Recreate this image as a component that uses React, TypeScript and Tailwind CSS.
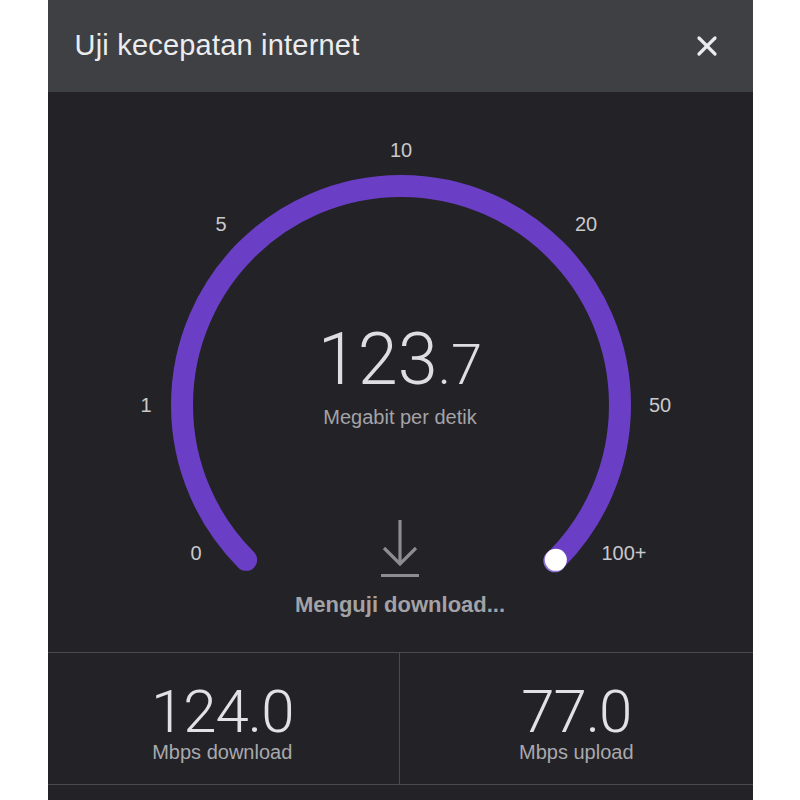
import { X } from 'lucide-react'

const CX = 353
const CY = 313
const R = 219
const D = R * Math.SQRT1_2

const LABELS = [
  { t: '10', x: 353, y: 58 },
  { t: '5', x: 173, y: 132 },
  { t: '20', x: 538, y: 132 },
  { t: '1', x: 98, y: 313 },
  { t: '50', x: 612, y: 313 },
  { t: '0', x: 148, y: 461 },
  { t: '100+', x: 576, y: 461 },
]

function Gauge() {
  const sx = CX - D
  const ex = CX + D
  const y = CY + D
  return (
    <svg className="absolute inset-0" width="705" height="560" viewBox="0 0 705 560">
      <path
        d={`M ${sx} ${y} A ${R} ${R} 0 1 1 ${ex} ${y}`}
        fill="none"
        stroke="#6a3fc5"
        strokeWidth="22"
        strokeLinecap="round"
      />
      <circle cx={ex - 1} cy={y + 1} r="11.5" fill="#8f73d8" />
      <circle cx={ex} cy={y} r="11" fill="#ffffff" />
      {LABELS.map((l) => (
        <text
          key={l.t}
          x={l.x}
          y={l.y}
          textAnchor="middle"
          dominantBaseline="central"
          fill="#c9c9cd"
          fontSize="20"
          fontFamily="'Liberation Sans', Arial, sans-serif"
        >
          {l.t}
        </text>
      ))}
    </svg>
  )
}

function Stat({ value, label }: { value: string; label: string }) {
  return (
    <div className="flex flex-col items-center justify-center pt-[5px]">
      <div className="text-[60px] leading-[62px] font-light text-[#e2e2e6] font-['Roboto',sans-serif] tracking-[-1px]">
        {value}
      </div>
      <div className="text-[20px] leading-[18px] text-[#a9a9ae] font-['Liberation_Sans',Arial,sans-serif]">
        {label}
      </div>
    </div>
  )
}

export default function App() {
  return (
    <div className="w-[800px] h-[800px] bg-white flex justify-center overflow-hidden">
      <div className="w-[705px] flex flex-col bg-[#232226] font-['Liberation_Sans',Arial,sans-serif]">
        <div className="h-[92px] shrink-0 bg-[#3e4044] flex items-center justify-between pl-[27px] pr-[30px]">
          <span className="text-[29px] text-[#ececee] tracking-[0.2px]">Uji kecepatan internet</span>
          <X className="w-[32px] h-[32px] text-[#ececee]" strokeWidth={2.4} />
        </div>

        <div className="relative h-[560px] shrink-0">
          <Gauge />
          <div className="absolute left-0 right-0 top-[232px] flex flex-col items-center">
            <div className="flex items-baseline text-[#dedee2] font-['Roboto',sans-serif] font-light leading-none">
              <span className="text-[72px]">123</span>
              <span className="text-[56px]">.7</span>
            </div>
            <div className="mt-[6px] text-[20px] text-[#a3a3a8]">Megabit per detik</div>
          </div>
          <div className="absolute left-0 right-0 top-[426px] flex flex-col items-center">
            <svg width="40" height="60" viewBox="0 0 40 60" fill="none" stroke="#8c8c92" strokeWidth="3.2">
              <path d="M20 2 V45" />
              <path d="M4 30 L20 46 L36 30" />
              <path d="M1 57.5 H39" />
            </svg>
            <div className="mt-[10px] text-[22px] font-bold text-[#a2a2a7]">Menguji download...</div>
          </div>
        </div>

        <div className="h-[133px] shrink-0 grid grid-cols-2 border-t border-b border-[#4a4a4f]">
          <div className="border-r border-[#4a4a4f] flex items-center justify-center pr-[2px]">
            <Stat value="124.0" label="Mbps download" />
          </div>
          <div className="flex items-center justify-center">
            <Stat value="77.0" label="Mbps upload" />
          </div>
        </div>
        <div className="flex-1" />
      </div>
    </div>
  )
}
